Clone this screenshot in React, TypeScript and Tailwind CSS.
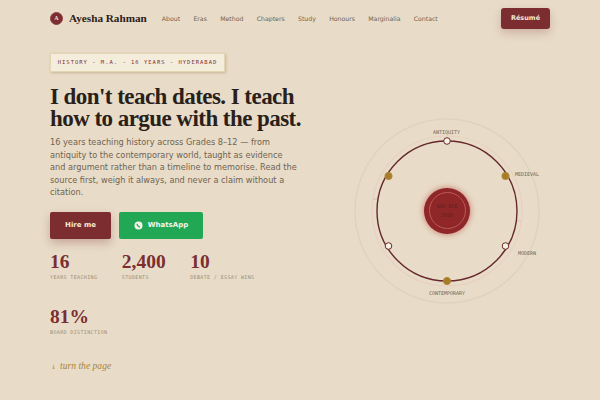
const navLinks = ['About', 'Eras', 'Method', 'Chapters', 'Study', 'Honours', 'Marginalia', 'Contact'];

const stats = [
  { value: '16', label: 'YEARS TEACHING' },
  { value: '2,400', label: 'STUDENTS' },
  { value: '10', label: 'DEBATE / ESSAY WINS' },
  { value: '81%', label: 'BOARD DISTINCTION' },
];

const nodes = [
  { x: 93, y: 23, gold: false },
  { x: 151.5, y: 58, gold: true },
  { x: 151.5, y: 128, gold: false },
  { x: 93, y: 163, gold: true },
  { x: 34.5, y: 128, gold: false },
  { x: 34.5, y: 58, gold: true },
];

const serif = "font-['Liberation_Serif',serif]";

function EraWheel() {
  return (
    <div className="relative w-[186px] h-[186px]">
      <svg width="186" height="186" viewBox="0 0 186 186" fill="none">
        <circle cx="93" cy="93" r="92" stroke="#dfd3c0" strokeWidth="1.5" />
        <circle cx="93" cy="93" r="75" stroke="#e8d0c0" strokeWidth="1.2" />
        <circle cx="93" cy="93" r="70" stroke="#66282a" strokeWidth="1.4" />
        <path d="M19 81 L23 81.5 M167 103 L163 102.5" stroke="#d8c4b0" strokeWidth="1" />
        {nodes.map(n => (
          <circle
            key={`${n.x}-${n.y}`}
            cx={n.x}
            cy={n.y}
            r={n.gold ? 3.6 : 3.3}
            fill={n.gold ? '#a67c28' : '#f8f2e4'}
            stroke={n.gold ? '#b08a3a' : '#66282a'}
            strokeWidth="1"
          />
        ))}
      </svg>
      <span className="absolute left-[79px] top-[11px] font-['DejaVu_Sans_Mono',monospace] text-[5px] text-[#6f6350]">ANTIQUITY</span>
      <span className="absolute left-[161px] top-[53px] font-['DejaVu_Sans_Mono',monospace] text-[5px] text-[#6f6350]">MEDIEVAL</span>
      <span className="absolute left-[164px] top-[132px] font-['DejaVu_Sans_Mono',monospace] text-[5px] text-[#6f6350]">MODERN</span>
      <span className="absolute left-[75px] top-[172px] font-['DejaVu_Sans_Mono',monospace] text-[5px] text-[#6f6350]">CONTEMPORARY</span>
      <div className="absolute left-[70px] top-[70px] w-[46px] h-[46px] rounded-full bg-[#8f2729] shadow-[0_0_6px_rgba(180,40,40,0.6)] flex items-center justify-center">
        <div className="w-[37px] h-[37px] rounded-full border border-[#bb5a52] flex flex-col items-center justify-center font-['DejaVu_Sans_Mono',monospace] text-[5px] leading-[9px] text-[#5e2020]">
          <span>480 BCE</span>
          <span>2026</span>
        </div>
      </div>
    </div>
  );
}

export default function App() {
  return (
    <div className="w-[600px] h-[400px] overflow-hidden bg-[#e8dcc8] font-['DejaVu_Sans',sans-serif]">
      <nav className="h-[37px] px-[50px] flex items-center">
        <div className={`${serif} w-[13px] h-[13px] rounded-full bg-[#7b2d30] border border-[#8f3f40] flex items-center justify-center text-[6px] font-bold text-[#f5e9d4]`}>A</div>
        <span className={`${serif} ml-[6px] text-[11.2px] font-bold text-[#2a201a]`}>Ayesha Rahman</span>
        <div className="ml-[15px] flex gap-[13.3px] text-[6.2px] text-[#6f6350]">
          {navLinks.map(link => (
            <a key={link}>{link}</a>
          ))}
        </div>
        <button className="ml-auto w-[49px] h-[21px] rounded-[3px] bg-[#7b2d30] text-[6.5px] font-bold text-[#f5e9d4] shadow-[0_4px_10px_rgba(123,45,48,0.25)]">Résumé</button>
      </nav>

      <div className="px-[50px] flex">
        <div className="w-[304px] shrink-0">
          <div className="mt-[16px] w-[175px] h-[19px] flex items-center justify-center rounded-[1px] border border-[#e4d6b4] bg-[#f5eddc] shadow-[1px_1px_3px_rgba(150,125,70,0.4)] font-['DejaVu_Sans_Mono',monospace] text-[5.5px] tracking-[1px] text-[#7b2d30]">
            HISTORY - M.A. - 16 YEARS - HYDERABAD
          </div>
          <h1 className={`${serif} mt-[13.5px] text-[23px] leading-[22px] font-bold tracking-[-0.55px] text-[#2a201a]`}>
            I don't teach dates. I teach<br />how to argue with the past.
          </h1>
          <p className="mt-[6.5px] w-[250px] text-[8.2px] leading-[12.6px] text-[#6f6350]">
            16 years teaching history across Grades 8–12 — from antiquity to the contemporary world, taught as evidence and argument rather than a timeline to memorise. Read the source first, weigh it always, and never a claim without a citation.
          </p>
          <div className="mt-[13px] flex gap-[8px]">
            <button className="w-[61px] h-[27px] rounded-[2px] bg-[#7b2d30] text-[7px] font-bold text-[#f5e9d4] shadow-[0_4px_10px_rgba(123,45,48,0.3)]">Hire me</button>
            <button className="w-[84px] h-[27px] rounded-[2px] bg-[#22a855] flex items-center justify-center gap-[5px] text-[7px] font-bold text-[#f5f5ea]">
              <svg width="9" height="9" viewBox="0 0 9 9">
                <circle cx="4.5" cy="4.5" r="4" fill="#f5f5ea" />
                <path d="M3 2.8 Q2.9 5 6 6.2" stroke="#22a855" strokeWidth="1.1" fill="none" />
              </svg>
              WhatsApp
            </button>
          </div>
          <div className="mt-[12px] w-[240px] flex flex-wrap gap-x-[24.5px] gap-y-[24px]">
            {stats.map(s => (
              <div key={s.label}>
                <div className={`${serif} text-[19.5px] leading-[22px] font-bold text-[#7b2d30]`}>{s.value}</div>
                <div className="mt-[1.5px] font-['DejaVu_Sans_Mono',monospace] text-[5px] tracking-[0.37px] text-[#9c8f78]">{s.label}</div>
              </div>
            ))}
          </div>
          <div className={`${serif} mt-[22px] flex items-center gap-[4px] text-[9.6px] italic text-[#a8843a]`}>
            <span className="ml-[1px] not-italic text-[6px] font-['DejaVu_Sans',sans-serif]">↓</span>
            turn the page
          </div>
        </div>
        <div className="mt-[80.5px]">
          <EraWheel />
        </div>
      </div>
    </div>
  );
}
